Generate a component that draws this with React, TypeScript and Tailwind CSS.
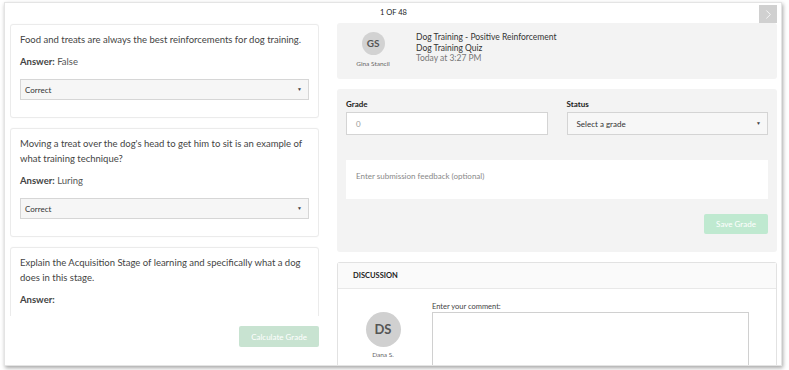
import { ChevronRight } from 'lucide-react';

const font = { fontFamily: 'Lato, "Open Sans", sans-serif' };

function GradeSelect({ value }: { value: string }) {
  return (
    <div className="flex h-[21px] items-center justify-between border border-[#d6d6d6] bg-[#f6f6f6] pl-[4px] pr-[6px] text-[8px] text-[#333]">
      <span>{value}</span>
      <span className="text-[5px] text-[#444]">▼</span>
    </div>
  );
}

function QuestionCard({
  question,
  answer,
  select = true,
}: {
  question: string;
  answer: string;
  select?: boolean;
}) {
  return (
    <div className="shrink-0 rounded-[3px] border border-[#ebebeb] bg-white px-[9px] pt-[7px] pb-[17px] shadow-[0_0_2px_rgba(0,0,0,0.04)]">
      <p className="text-[9.5px] leading-[15px] text-[#444]">{question}</p>
      <p className="mt-[9px] text-[9.5px] leading-[12px] text-[#555]">
        <span className="font-bold text-[#444]">Answer:</span> {answer}
      </p>
      {select && (
        <div className="mt-[11px]">
          <GradeSelect value="Correct" />
        </div>
      )}
    </div>
  );
}

export default function App() {
  return (
    <div className="h-[370px] w-[789px] overflow-hidden bg-white pl-[4px] pt-[2px]" style={font}>
      <div className="flex h-[364px] w-[778px] flex-col overflow-hidden border border-[#e4e4e4] bg-white shadow-[1px_2px_4px_rgba(0,0,0,0.35)]">
        {/* top bar */}
        <div className="flex h-[20px] shrink-0 items-start">
          <div className="w-[332px]" />
          <div className="flex-1 pl-[43px] pt-[5px] text-[7.5px] leading-[9px] text-[#222]">1 OF 48</div>
          <div className="mr-[4px] mt-[2px] flex h-[18px] w-[18px] items-center justify-center bg-[#d0d0d0]">
            <ChevronRight className="h-[15px] w-[15px] text-white" strokeWidth={1.25} />
          </div>
        </div>

        <div className="flex min-h-0 flex-1 gap-[18px] pl-[5px]">
          {/* left column */}
          <div className="flex w-[309px] shrink-0 flex-col">
            <div className="flex h-[293px] flex-col gap-[10px] overflow-hidden pt-[1px]">
              <QuestionCard
                question="Food and treats are always the best reinforcements for dog training."
                answer="False"
              />
              <QuestionCard
                question="Moving a treat over the dog's head to get him to sit is an example of what training technique?"
                answer="Luring"
              />
              <QuestionCard
                question="Explain the Acquisition Stage of learning and specifically what a dog does in this stage."
                answer=""
                select={false}
              />
            </div>
            <div className="mt-[10px] flex justify-end">
              <button className="h-[21px] w-[80px] rounded-[2px] bg-[#c8e3d1] text-[8px] text-white">
                Calculate Grade
              </button>
            </div>
          </div>

          {/* right column */}
          <div className="flex w-[440px] flex-col gap-[10px] overflow-hidden">
            <div className="flex h-[56px] shrink-0 items-start rounded-[3px] bg-[#f3f3f3] pt-[9px]">
              <div className="flex w-[72px] flex-col items-center">
                <div className="flex h-[23px] w-[23px] items-center justify-center rounded-full bg-[#d2d2d2] text-[10px] font-bold text-[#555]">
                  GS
                </div>
                <div className="mt-[4px] text-[6.5px] text-[#666]">Gina Stancil</div>
              </div>
              <div className="ml-[7px] text-[8.5px] leading-[10.5px]">
                <div className="text-[#333]">Dog Training - Positive Reinforcement</div>
                <div className="text-[#333]">Dog Training Quiz</div>
                <div className="text-[#777]">Today at 3:27 PM</div>
              </div>
            </div>

            <div className="flex h-[163px] shrink-0 flex-col rounded-[3px] bg-[#f3f3f3] px-[9px] pt-[10px]">
              <div className="flex gap-[19px]">
                <div className="flex-1">
                  <div className="mb-[3px] text-[8px] font-bold leading-[10px] text-[#222]">Grade</div>
                  <div className="flex h-[23px] items-center border border-[#d4d4d4] bg-white pl-[9px] text-[8px] text-[#999]">
                    0
                  </div>
                </div>
                <div className="flex-1">
                  <div className="mb-[3px] text-[8px] font-bold leading-[10px] text-[#222]">Status</div>
                  <div className="flex h-[23px] items-center justify-between border border-[#d4d4d4] bg-[#f7f7f7] pl-[9px] pr-[6px] text-[8px] text-[#333]">
                    <span>Select a grade</span>
                    <span className="text-[5px] text-[#444]">▼</span>
                  </div>
                </div>
              </div>
              <div className="mt-[25px] flex h-[39px] items-start bg-white pl-[10px] pt-[11px] text-[8px] leading-[10px] text-[#888]">
                Enter submission feedback (optional)
              </div>
              <div className="mt-[15px] flex justify-end">
                <button className="h-[20px] w-[64px] rounded-[2px] bg-[#bfe9d0] text-[8px] text-white">
                  Save Grade
                </button>
              </div>
            </div>

            <div className="h-[120px] shrink-0 rounded-t-[3px] border border-b-0 border-[#e2e2e2] bg-white">
              <div className="flex h-[26px] items-center border-b border-[#e8e8e8] bg-[#fafafa] pl-[15px] text-[7.5px] font-bold text-[#222]">
                DISCUSSION
              </div>
              <div className="flex pt-[13px]">
                <div className="flex w-[90px] flex-col items-center pt-[10px]">
                  <div className="flex h-[35px] w-[35px] items-center justify-center rounded-full bg-[#d0d0d0] text-[13px] font-bold text-[#555]">
                    DS
                  </div>
                  <div className="mt-[3px] text-[6.5px] text-[#666]">Dana S.</div>
                </div>
                <div className="ml-[4px] flex w-[317px] flex-col">
                  <div className="mb-[1px] text-[7.5px] leading-[9px] text-[#444]">Enter your comment:</div>
                  <div className="h-[80px] border border-[#d0d0d0] bg-white" />
                </div>
              </div>
            </div>
          </div>
        </div>
      </div>
    </div>
  );
}
